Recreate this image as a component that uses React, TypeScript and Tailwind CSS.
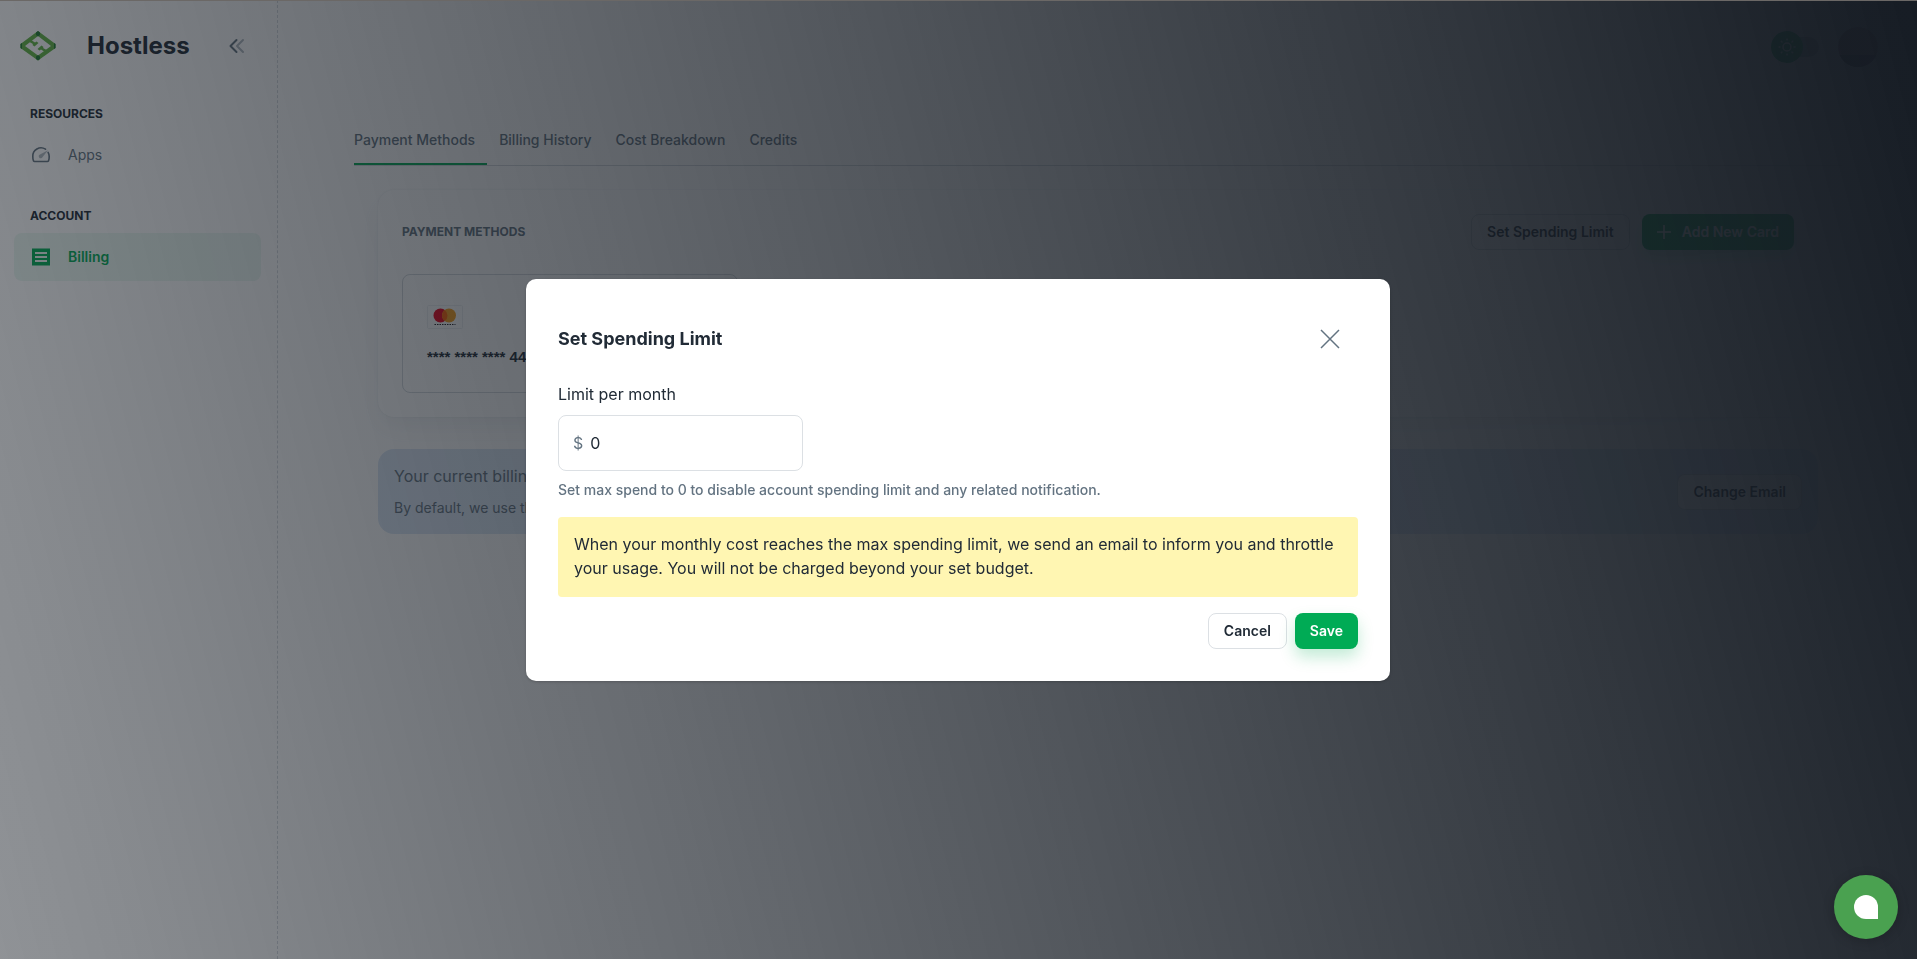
import React, { useState } from 'react';

interface NavLinkProps {
  label: string;
  active?: boolean;
  icon: React.ReactNode;
}

const TABS = ['Payment Methods', 'Billing History', 'Cost Breakdown', 'Credits'];

const Logo = () => (
  <svg className="h-8 w-9 shrink-0" viewBox="0 0 36 32" aria-hidden="true">
    <path fillRule="evenodd" fill="#62b446" d="M18 1 35.500 14v4L18 30.500.5 18v-4ZM18 6 5 16l13 9.500L31 16Z" />
    <path fill="#62b446" d="m8.500 11.500 2.500-1.500 4 2.500 1.500-1 2 1.500-4 3.500-2-1.500.5-1ZM27.500 20.500 25 22l-4-2.500-1.500 1-2-1.500 4-3.500 2 1.500-.5 1Z" />
    <path fill="#1f7a33" d="m18 1 2 1.500V5l-2 1.500L16 5V2.500ZM18 30.500l2-1.500v-2.500L18 25l-2 1.500V29ZM.5 14l1.500-1v6L.5 18ZM35.500 14 34 13v6l1.500-1Z" />
  </svg>
);

const CollapseIcon = () => (
  <svg className="h-6 w-6" viewBox="0 0 24 24" fill="none" stroke="currentColor" strokeWidth="2" strokeLinecap="round" strokeLinejoin="round">
    <path d="m11.500 6-6 6 6 6" />
    <path d="m18 6-6 6 6 6" opacity=".5" />
  </svg>
);

const GaugeIcon = () => (
  <svg className="h-6 w-6" viewBox="0 0 24 24" fill="none" stroke="currentColor" strokeWidth="1.600" strokeLinecap="round" strokeLinejoin="round">
    <path d="M16.500 6.200A8.200 8.200 0 0 0 3.800 13.500c0 1.900.2 3.400.7 4.400.2.400.6.600 1.100.6h12.800c.5 0 .9-.2 1.100-.6.5-1 .7-2.500.7-4.400 0-1.500-.4-2.900-1.100-4.100" />
    <path d="M19 7.200 13.600 14a2 2 0 1 1-2.600-2.600Z" fill="currentColor" stroke="none" opacity=".5" />
  </svg>
);

const ReceiptIcon = () => (
  <svg className="h-6 w-6" viewBox="0 0 24 24" aria-hidden="true">
    <path
      fill="currentColor"
      d="M18 17H6v-2h12v2zm0-4H6v-2h12v2zm0-4H6V7h12v2zM3 21l1-1 1 1 1-1 1 1 1-1 1 1 1-1 1 1 1-1 1 1 1-1 1 1 1-1 1 1 1-1 1 1 1-1 1 1V3l-1 1-1-1-1 1-1-1-1 1-1-1-1 1-1-1-1 1-1-1-1 1-1-1-1 1-1-1-1 1-1-1-1 1-1-1v18z"
    />
  </svg>
);

const SunIcon = () => (
  <svg className="h-5 w-5" viewBox="0 0 20 20" fill="none" stroke="#ffffff" strokeWidth="1.500" strokeLinecap="round">
    <circle cx="10" cy="10" r="4" />
    <path d="M10 2v1M10 17v1M2 10h1M17 10h1M4.300 4.300l.7.7M15 15l.7.7M4.300 15.700l.7-.7M15 5l.7-.7" />
  </svg>
);

const MastercardIcon = () => (
  <svg className="h-6 w-9" viewBox="0 0 36 24" aria-label="Mastercard">
    <rect x=".5" y=".5" width="35" height="23" rx="1" fill="#ffffff" stroke="#eceff1" />
    <circle cx="13.500" cy="10.500" r="7" fill="#eb001b" />
    <circle cx="22" cy="10.500" r="7" fill="#f79e1b" />
    <path d="M17.750 4.940a7 7 0 0 1 0 11.120 7 7 0 0 1 0-11.120Z" fill="#ff5f00" />
    <path d="M7.500 19.500h21" stroke="#231f20" strokeDasharray="1.500 1" />
  </svg>
);

const NavLink: React.FC<NavLinkProps> = ({ label, active, icon }) => (
  <a
    href="#"
    className={`flex h-12 items-center gap-[15px] rounded-lg pl-[15px] text-sm ${
      active ? 'bg-[#00ab55]/8 font-semibold text-[#00ab55]' : 'text-[#637381]'
    }`}
  >
    <span className="w-6">{icon}</span>
    {label}
  </a>
);

const Sidebar = () => (
  <aside className="w-[278px] shrink-0 border-r border-dashed border-[#919eab]/40 pr-4 pl-[14px]">
    <div className="flex items-center pt-[30px] pl-[6px]">
      <Logo />
      <span className="ml-[31px] text-2xl font-bold">Hostless</span>
      <button type="button" aria-label="Collapse menu" className="mr-3 ml-auto text-[#637381]">
        <CollapseIcon />
      </button>
    </div>
    <nav className="mt-[43px]">
      <h2 className="pl-4 text-xs leading-[18px] font-bold">RESOURCES</h2>
      <div className="mt-2">
        <NavLink label="Apps" icon={<GaugeIcon />} />
      </div>
      <h2 className="mt-[28px] pl-4 text-xs leading-[18px] font-bold">ACCOUNT</h2>
      <div className="mt-2">
        <NavLink label="Billing" icon={<ReceiptIcon />} active />
      </div>
    </nav>
  </aside>
);

const Header = () => (
  <header className="flex h-[94px] items-center justify-end gap-[19px] pr-[39px]">
    <button type="button" aria-label="Toggle theme" className="flex items-center">
      <span className="z-10 flex h-8 w-8 items-center justify-center rounded-full bg-[#00ab55]">
        <SunIcon />
      </span>
      <span className="-ml-4 h-5 w-8 rounded-full bg-[#919eab]/80" />
    </button>
    <span className="h-10 w-10 overflow-hidden rounded-full bg-[#a06a78]">
      <span className="mt-7 block h-3 bg-[#3a2c3c]" />
    </span>
  </header>
);

const PaymentMethods = () => (
  <section className="rounded-2xl bg-white p-6 shadow-[0_0_2px_0_rgba(145,158,171,0.2),0_12px_24px_-4px_rgba(145,158,171,0.16)]">
    <div className="flex items-center justify-between">
      <h3 className="text-xs font-bold text-[#637381]">PAYMENT METHODS</h3>
      <div className="flex gap-3">
        <button type="button" className="h-9 rounded-lg border border-[#919eab]/40 px-[15px] text-sm font-semibold">
          Set Spending Limit
        </button>
        <button
          type="button"
          className="flex h-9 items-center gap-[11px] rounded-lg bg-[#00ab55] px-[15px] text-sm font-semibold text-white shadow-[0_8px_16px_0_rgba(0,171,85,0.24)]"
        >
          <svg className="h-[14px] w-[14px]" viewBox="0 0 14 14" stroke="currentColor" strokeWidth="1.500">
            <path d="M7 0v14M0 7h14" />
          </svg>
          Add New Card
        </button>
      </div>
    </div>
    <div className="mt-6 h-[119px] w-[336px] rounded-lg border border-[#919eab]/40 px-6 pt-[30px]">
      <MastercardIcon />
      <p className="mt-[18px] font-['Liberation_Sans',sans-serif] text-[15px] leading-5 font-bold">**** **** **** 4444</p>
    </div>
  </section>
);

const BillingEmail = () => (
  <section className="mt-8 flex h-[85px] items-center justify-between rounded-2xl bg-[#dae6f5] px-4">
    <div className="text-[#637381]">
      <p className="text-base">Your current billing email</p>
      <p className="mt-2 text-sm leading-6">By default, we use the email address of your account</p>
    </div>
    <button type="button" className="h-9 rounded-lg border border-[#919eab]/40 bg-white px-[15px] text-sm font-semibold">
      Change Email
    </button>
  </section>
);

const SpendingLimitDialog = () => {
  const [limit, setLimit] = useState('0');

  return (
    <div
      role="dialog"
      aria-labelledby="dialog-title"
      className="w-[864px] max-w-full rounded-[10px] bg-white p-8 shadow-[0_1px_3px_rgba(0,0,0,0.2)]"
    >
      <div className="flex h-14 items-center justify-between pr-[15px]">
        <h2 id="dialog-title" className="text-lg font-bold">Set Spending Limit</h2>
        <button type="button" aria-label="Close" className="text-[#637381]">
          <svg className="h-[26px] w-[26px]" viewBox="0 0 26 26" fill="none" stroke="currentColor" strokeWidth="1.500">
            <path d="m4 4 18 18M22 4 4 22" />
          </svg>
        </button>
      </div>
      <label htmlFor="limit" className="mt-[15px] block text-base">Limit per month</label>
      <div className="mt-[9px] flex h-14 w-[245px] items-center gap-[7px] rounded-lg border border-[#919eab]/32 px-[14px]">
        <span className="text-base text-[#637381]">$</span>
        <input
          id="limit"
          type="text"
          value={limit}
          onChange={(e) => setLimit(e.target.value)}
          className="w-full min-w-0 bg-transparent text-base outline-none"
        />
      </div>
      <p className="mt-2 text-sm leading-[22px] font-medium text-[#637381]">
        Set max spend to 0 to disable account spending limit and any related notification.
      </p>
      <p className="mt-4 rounded bg-[#fff6b2] px-4 pt-[15px] pb-[17px] text-base">
        When your monthly cost reaches the max spending limit, we send an email to inform you and throttle your usage. You
        will not be charged beyond your set budget.
      </p>
      <div className="mt-4 flex justify-end gap-2">
        <button type="button" className="h-9 rounded-lg border border-[#919eab]/32 px-[15px] text-sm font-semibold">
          Cancel
        </button>
        <button
          type="button"
          className="h-9 rounded-lg bg-[#00ab55] px-[15px] text-sm font-semibold text-white shadow-[0_8px_16px_0_rgba(0,171,85,0.24)]"
        >
          Save
        </button>
      </div>
    </div>
  );
};

const App = () => {
  const [tab, setTab] = useState(TABS[0]);

  return (
    <div className="flex min-h-screen bg-white font-['Inter',sans-serif] text-[#212b36]">
      <Sidebar />
      <div className="min-w-0 flex-1 pl-px">
        <Header />
        <main className="mx-auto max-w-[1536px] px-6">
          <div role="tablist" className="flex gap-3 border-b border-[#919eab]/40 pt-5">
            {TABS.map((name) => (
              <button
                key={name}
                type="button"
                role="tab"
                aria-selected={tab === name}
                onClick={() => setTab(name)}
                className={`h-[51px] border-b-2 pt-0.5 pr-3 text-sm font-medium text-[#637381] ${
                  tab === name ? 'border-[#00ab55]' : 'border-transparent'
                }`}
              >
                {name}
              </button>
            ))}
          </div>
          <div className="px-6 pt-6">
            <PaymentMethods />
            <BillingEmail />
          </div>
        </main>
      </div>

      {/* Dimmed backdrop with the open dialog */}
      <div className="fixed inset-0 z-20 flex items-center justify-center bg-[linear-gradient(75deg,rgba(22,28,36,0.48)_0%,#161c24_100%)] pr-px">
        <SpendingLimitDialog />
      </div>

      {/* Hairline along the top of the window */}
      <div className="fixed inset-x-0 top-0 z-30 h-px bg-[#6b6866]" />

      <button
        type="button"
        aria-label="Open chat"
        className="fixed right-[19px] bottom-5 z-30 flex h-16 w-16 items-center justify-center rounded-full bg-[#4aa150] shadow-[0_2px_12px_rgba(0,0,0,0.2)]"
      >
        <span className="h-6 w-6 rounded-full rounded-br-none bg-white" />
      </button>
    </div>
  );
};

export default App;
